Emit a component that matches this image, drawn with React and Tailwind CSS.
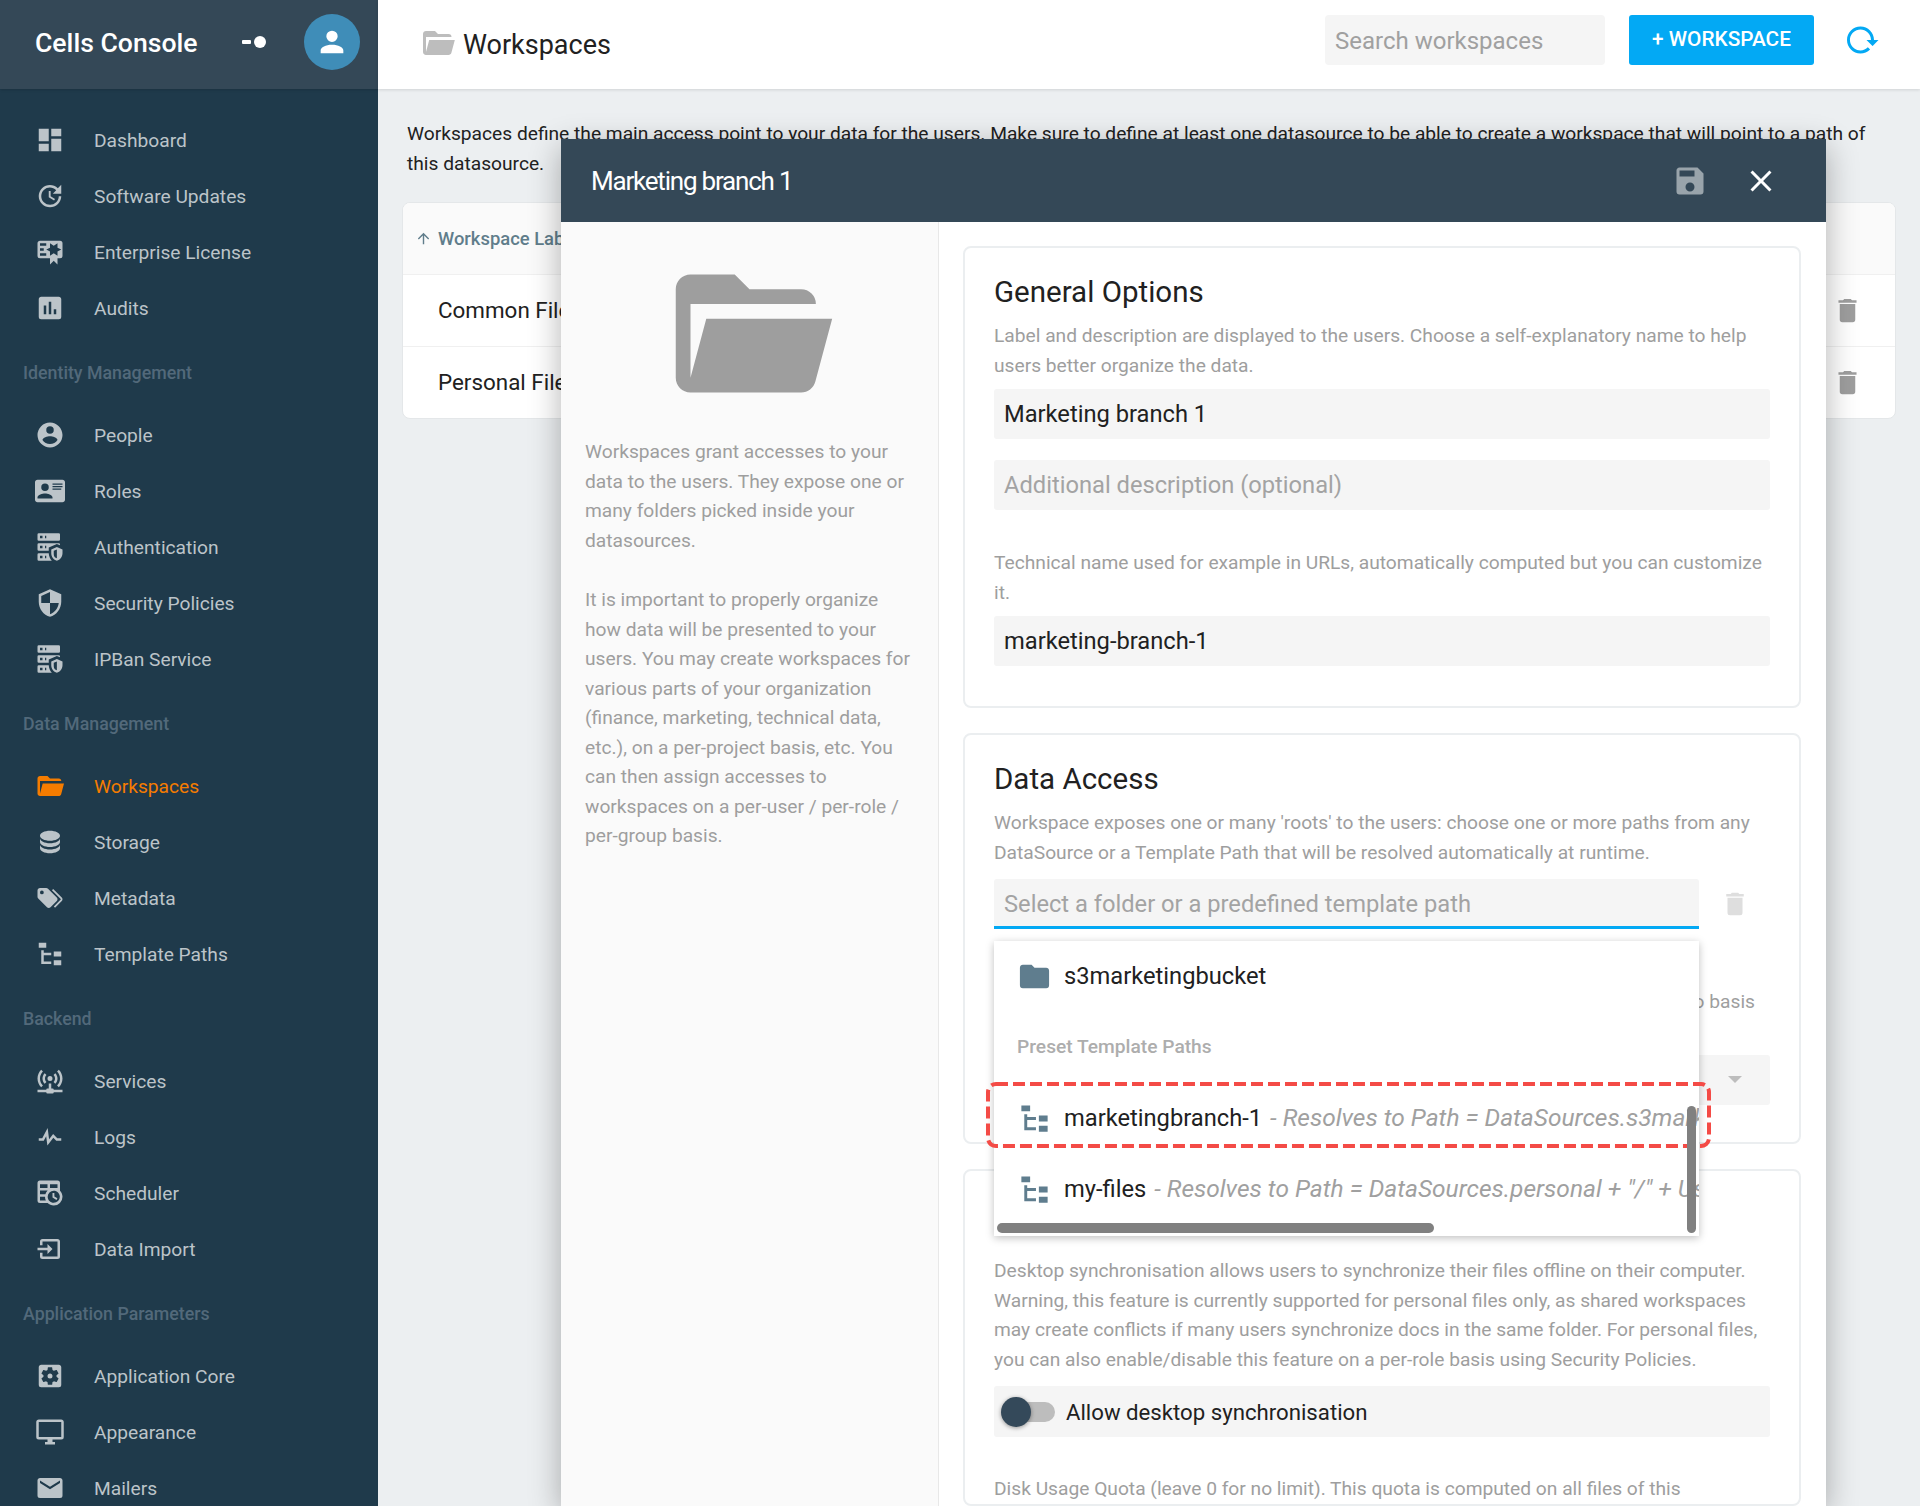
import { MdArrowUpward } from "react-icons/md";

const P = {
  dashboard: "M13,3V9H21V3M13,21H21V11H13M3,21H11V15H3M3,13H11V3H3V13Z",
  update:
    "M21,10.12H14.22L16.96,7.3C14.23,4.6 9.81,4.5 7.08,7.2C4.35,9.91 4.35,14.28 7.08,17C9.81,19.7 14.23,19.7 16.96,17C18.32,15.65 19,14.08 19,12.1H21C21,14.08 20.12,16.65 18.36,18.39C14.85,21.87 9.15,21.87 5.64,18.39C2.14,14.92 2.11,9.28 5.62,5.81C9.13,2.34 14.76,2.34 18.27,5.81L21,3V10.12M12.5,8V12.25L16,14.33L15.28,15.54L11,13V8H12.5Z",
  certificate:
    "M4,3C2.89,3 2,3.89 2,5V15A2,2 0 0,0 4,17H12V22L15,19L18,22V17H20A2,2 0 0,0 22,15V8L22,6V5A2,2 0 0,0 20,3H16V3H4M12,5L15,7L18,5V8.5L21,10L18,11.5V15L15,13L12,15V11.5L9,10L12,8.5V5M4,5H9V7H4V5M4,9H7V11H4V9M4,13H9V15H4V13Z",
  poll: "M17,17H15V13H17M13,17H11V7H13M9,17H7V10H9M19,3H5C3.89,3 3,3.89 3,5V19A2,2 0 0,0 5,21H19A2,2 0 0,0 21,19V5C21,3.89 20.1,3 19,3Z",
  accountCircle:
    "M12,19.2C9.5,19.2 7.29,17.92 6,16C6.03,14 10,12.9 12,12.9C14,12.9 17.97,14 18,16C16.71,17.92 14.5,19.2 12,19.2M12,5A3,3 0 0,1 15,8A3,3 0 0,1 12,11A3,3 0 0,1 9,8A3,3 0 0,1 12,5M12,2A10,10 0 0,0 2,12A10,10 0 0,0 12,22A10,10 0 0,0 22,12C22,6.47 17.5,2 12,2Z",
  card: "M2,3H22C23.05,3 24,3.95 24,5V19C24,20.05 23.05,21 22,21H2C0.95,21 0,20.05 0,19V5C0,3.95 0.95,3 2,3M14,6V7H22V6H14M14,8V9H21.5L22,9V8H14M14,10V11H21V10H14M8,13.91C6,13.91 2,15 2,17V18H14V17C14,15 10,13.91 8,13.91M8,6A3,3 0 0,0 5,9A3,3 0 0,0 8,12A3,3 0 0,0 11,9A3,3 0 0,0 8,6Z",
  serverSecurity:
    "M3,1H19A1,1 0 0,1 20,2V6A1,1 0 0,1 19,7H3A1,1 0 0,1 2,6V2A1,1 0 0,1 3,1M3,9H19A1,1 0 0,1 20,10V10.67L17.5,9.56L11,12.44V15H3A1,1 0 0,1 2,14V10A1,1 0 0,1 3,9M3,17H11C11.06,19.25 12,21.4 13.46,23H3A1,1 0 0,1 2,22V18A1,1 0 0,1 3,17M8,5H9V3H8V5M8,13H9V11H8V13M8,21H9V19H8V21M4,3V5H6V3H4M4,11V13H6V11H4M4,19V21H6V19H4M17.5,12L22,14V17C22,19.78 20.08,22.37 17.5,23C14.92,22.37 13,19.78 13,17V14L17.5,12M17.5,13.94L15,15.06V17.72C15,19.26 16.07,20.7 17.5,21.06V13.94Z",
  security:
    "M12,12H19C18.47,16.11 15.72,19.78 12,20.92V12H5V6.3L12,3.19M12,1L3,5V11C3,16.55 6.84,21.73 12,23C17.16,21.73 21,16.55 21,11V5L12,1Z",
  folderOpen:
    "M19,20H4C2.89,20 2,19.1 2,18V6C2,4.89 2.89,4 4,4H10L12,6H19A2,2 0 0,1 21,8H21L4,8V18L6.14,10H23.21L20.93,18.5C20.7,19.37 19.92,20 19,20Z",
  database:
    "M12,3C7.58,3 4,4.79 4,7C4,9.21 7.58,11 12,11C16.42,11 20,9.21 20,7C20,4.79 16.42,3 12,3M4,9V12C4,14.21 7.58,16 12,16C16.42,16 20,14.21 20,12V9C20,11.21 16.42,13 12,13C7.58,13 4,11.21 4,9M4,14V17C4,19.21 7.58,21 12,21C16.42,21 20,19.21 20,17V14C20,16.21 16.42,18 12,18C7.58,18 4,16.21 4,14Z",
  tags: "M5.5,9A1.5,1.5 0 0,0 7,7.5A1.5,1.5 0 0,0 5.5,6A1.5,1.5 0 0,0 4,7.5A1.5,1.5 0 0,0 5.5,9M17.41,11.58C17.77,11.94 18,12.44 18,13C18,13.55 17.78,14.05 17.41,14.41L12.41,19.41C12.05,19.77 11.55,20 11,20C10.45,20 9.95,19.78 9.58,19.41L2.59,12.42C2.22,12.05 2,11.55 2,11V6C2,4.89 2.89,4 4,4H9C9.55,4 10.05,4.22 10.41,4.58L17.41,11.58M13.54,5.71L14.54,4.71L21.41,11.58C21.78,11.94 22,12.45 22,13C22,13.55 21.78,14.05 21.42,14.41L16.04,19.79L15.04,18.79L20.75,13L13.54,5.71Z",
  fileTree: "M3,3H9V7H3V3M15,10H21V14H15V10M15,17H21V21H15V17M13,13H7V18H13V20H7L5,20V9H7V11H13V13Z",
  network:
    "M4.93,2.93C3.12,4.74 2,7.24 2,10C2,12.76 3.12,15.26 4.93,17.07L6.34,15.66C4.89,14.22 4,12.22 4,10C4,7.79 4.89,5.78 6.34,4.34L4.93,2.93M19.07,2.93L17.66,4.34C19.11,5.78 20,7.79 20,10C20,12.22 19.11,14.22 17.66,15.66L19.07,17.07C20.88,15.26 22,12.76 22,10C22,7.24 20.88,4.74 19.07,2.93M7.76,5.76C6.67,6.85 6,8.35 6,10C6,11.65 6.67,13.15 7.76,14.24L9.17,12.83C8.45,12.11 8,11.11 8,10C8,8.89 8.45,7.89 9.17,7.17L7.76,5.76M16.24,5.76L14.83,7.17C15.55,7.89 16,8.89 16,10C16,11.11 15.55,12.11 14.83,12.83L16.24,14.24C17.33,13.15 18,11.65 18,10C18,8.35 17.33,6.85 16.24,5.76M12,8A2,2 0 0,0 10,10A2,2 0 0,0 12,12A2,2 0 0,0 14,10A2,2 0 0,0 12,8M11,14V18H10A1,1 0 0,0 9,19H2V21H9A1,1 0 0,0 10,22H14A1,1 0 0,0 15,21H22V19H15A1,1 0 0,0 14,18H13V14H11Z",
  pulse: "M3,13H5.79L10.1,4.79L11.28,13.75L14.5,9.66L17.83,13H21V15H17L14.67,12.67L9.92,18.73L8.94,11.31L7,15H3V13Z",
  timetable:
    "M14,12H15.5V14.82L17.94,16.23L17.19,17.53L14,15.69V12M4,2H18A2,2 0 0,1 20,4V10.1C21.24,11.36 22,13.09 22,15A7,7 0 0,1 15,22C13.09,22 11.36,21.24 10.1,20H4A2,2 0 0,1 2,18V4A2,2 0 0,1 4,2M4,15V18H8.67C8.24,17.09 8,16.07 8,15H4M4,8H10V5H4V8M18,8V5H12V8H18M4,13H8.29C8.63,11.85 9.26,10.82 10.1,10H4V13M15,10.15A4.85,4.85 0 0,0 10.15,15C10.15,17.68 12.32,19.85 15,19.85A4.85,4.85 0 0,0 19.85,15C19.85,12.32 17.68,10.15 15,10.15Z",
  import: "M14,12L10,8V11H2V13H10V16M20,18V6C20,4.89 19.1,4 18,4H6A2,2 0 0,0 4,6V9H6V6H18V18H6V15H4V18A2,2 0 0,0 6,20H18A2,2 0 0,0 20,18Z",
  settingsBox:
    "M17.25,12C17.25,12.23 17.23,12.46 17.2,12.68L18.68,13.84C18.81,13.95 18.85,14.13 18.76,14.29L17.36,16.71C17.27,16.86 17.09,16.92 16.93,16.86L15.19,16.16C14.83,16.44 14.43,16.67 14,16.85L13.75,18.7C13.72,18.87 13.57,19 13.4,19H10.6C10.43,19 10.28,18.87 10.25,18.7L10,16.85C9.56,16.67 9.17,16.44 8.81,16.16L7.07,16.86C6.91,16.92 6.73,16.86 6.64,16.71L5.24,14.29C5.15,14.13 5.19,13.95 5.32,13.84L6.8,12.68C6.77,12.46 6.75,12.23 6.75,12C6.75,11.77 6.77,11.54 6.8,11.32L5.32,10.16C5.19,10.05 5.15,9.87 5.24,9.71L6.64,7.29C6.73,7.14 6.91,7.08 7.07,7.14L8.81,7.84C9.17,7.56 9.56,7.33 10,7.15L10.25,5.3C10.28,5.13 10.43,5 10.6,5H13.4C13.57,5 13.72,5.13 13.75,5.3L14,7.15C14.43,7.33 14.83,7.56 15.19,7.84L16.93,7.14C17.09,7.08 17.27,7.14 17.36,7.29L18.76,9.71C18.85,9.87 18.81,10.05 18.68,10.16L17.2,11.32C17.23,11.54 17.25,11.77 17.25,12M19,3H5C3.89,3 3,3.89 3,5V19A2,2 0 0,0 5,21H19A2,2 0 0,0 21,19V5C21,3.89 20.1,3 19,3M12,10C10.89,10 10,10.89 10,12A2,2 0 0,0 12,14A2,2 0 0,0 14,12C14,10.89 13.1,10 12,10Z",
  monitor:
    "M21,16H3V4H21M21,2H3C1.89,2 1,2.89 1,4V16A2,2 0 0,0 3,18H10V20H8V22H16V20H14V18H21A2,2 0 0,0 23,16V4C23,2.89 22.1,2 21,2Z",
  email: "M20,8L12,13L4,8V6L12,11L20,6M20,4H4C2.89,4 2,4.89 2,6V18A2,2 0 0,0 4,20H20A2,2 0 0,0 22,18V6C22,4.89 21.1,4 20,4Z",
  folder: "M10,4H4C2.89,4 2,4.89 2,6V18A2,2 0 0,0 4,20H20A2,2 0 0,0 22,18V8C22,6.89 21.1,6 20,6H12L10,4Z",
  trash: "M19,4H15.5L14.5,3H9.5L8.5,4H5V6H19M6,19A2,2 0 0,0 8,21H16A2,2 0 0,0 18,19V7H6V19Z",
  save: "M15,9H5V5H15M12,19A3,3 0 0,1 9,16A3,3 0 0,1 12,13A3,3 0 0,1 15,16A3,3 0 0,1 12,19M17,3H5C3.89,3 3,3.9 3,5V19A2,2 0 0,0 5,21H19A2,2 0 0,0 21,19V7L17,3Z",
  close: "M19,6.41L17.59,5L12,10.59L6.41,5L5,6.41L10.59,12L5,17.59L6.41,19L12,13.41L17.59,19L19,17.59L13.41,12L19,6.41Z",
  account: "M12,4A4,4 0 0,1 16,8A4,4 0 0,1 12,12A4,4 0 0,1 8,8A4,4 0 0,1 12,4M12,14C16.42,14 20,15.79 20,18V20H4V18C4,15.79 7.58,14 12,14Z",
  reload: "M2 12C2 16.97 6.03 21 11 21C13.39 21 15.68 20.06 17.4 18.4L15.9 16.9C14.63 18.25 12.86 19 11 19C4.76 19 1.64 11.46 6.05 7.05C10.46 2.64 18 5.77 18 12H15L19 16H19.1L23 12H20C20 7.03 15.97 3 11 3C6.03 3 2 7.03 2 12Z",
};

const Icon = ({ d, className }) => (
  <svg viewBox="0 0 24 24" fill="currentColor" className={className}>
    <path d={d} />
  </svg>
);

const menu = [
  {
    items: [
      ["Dashboard", P.dashboard],
      ["Software Updates", P.update],
      ["Enterprise License", P.certificate],
      ["Audits", P.poll],
    ],
  },
  {
    title: "Identity Management",
    items: [
      ["People", P.accountCircle],
      ["Roles", P.card],
      ["Authentication", P.serverSecurity],
      ["Security Policies", P.security],
      ["IPBan Service", P.serverSecurity],
    ],
  },
  {
    title: "Data Management",
    items: [
      ["Workspaces", P.folderOpen, true],
      ["Storage", P.database],
      ["Metadata", P.tags],
      ["Template Paths", P.fileTree],
    ],
  },
  {
    title: "Backend",
    items: [
      ["Services", P.network],
      ["Logs", P.pulse],
      ["Scheduler", P.timetable],
      ["Data Import", P.import],
    ],
  },
  {
    title: "Application Parameters",
    items: [
      ["Application Core", P.settingsBox],
      ["Appearance", P.monitor],
      ["Mailers", P.email],
    ],
  },
];

const Sidebar = () => (
  <aside className="w-[378px] shrink-0 h-full bg-[#1f3a4b] overflow-hidden">
    <div className="h-[89px] bg-[#344857] flex items-center pl-[35px] pb-[6px] shadow-sm">
      <span className="mt-[2px] text-[26.6px] font-medium text-white w-[207px]">Cells Console</span>
      <svg width="24" height="14" viewBox="0 0 24 14" fill="white">
        <rect x="0" y="5" width="9" height="4" rx="1" />
        <circle cx="18" cy="7" r="6" />
      </svg>
      <div className="ml-[38px] w-[56px] h-[56px] rounded-full bg-[#3f8db8] flex items-center justify-center">
        <Icon d={P.account} className="w-[34px] h-[34px] text-white" />
      </div>
    </div>
    <nav className="pt-[23px]">
      {menu.map((section, i) => (
        <div key={i}>
          {section.title && (
            <div className="h-[71px] pt-[3px] pl-[23px] flex items-center text-[17.8px] font-medium text-[#52697a]">
              {section.title}
            </div>
          )}
          {section.items.map(([label, icon, active]) => (
            <div
              key={label}
              className={`h-[56px] flex items-center pl-[35px] text-[19.2px] ${active ? "text-[#f57c00]" : "text-[#bcc4c9]"}`}
            >
              <Icon d={icon} className="w-[30px] h-[30px] shrink-0" />
              <span className="ml-[29px] mt-[2px]">{label}</span>
            </div>
          ))}
        </div>
      ))}
    </nav>
  </aside>
);

const TopBar = () => (
  <header className="h-[89px] bg-white flex items-center pl-[42px] shadow-[0_1px_3px_rgba(0,0,0,0.12)]">
    <Icon d={P.folderOpen} className="w-[36px] h-[36px] text-[#bdbdbd] -mt-[3px]" />
    <h1 className="ml-[7px] mt-[2px] text-[27px] text-[#212121]">Workspaces</h1>
    <div className="ml-auto -mt-[9px] w-[280px] h-[50px] rounded bg-[#f5f5f5] flex items-center pl-[10px] pt-[2px] text-[24px] text-[#a0a0a0]">
      Search workspaces
    </div>
    <button className="ml-[24px] -mt-[9px] w-[185px] h-[50px] rounded-[3px] bg-[#03a9f4] text-white text-[20.8px] font-medium">
      + WORKSPACE
    </button>
    <Icon d={P.reload} className="ml-[30px] mr-[40px] -mt-[9px] w-[36px] h-[36px] text-[#03a9f4]" />
  </header>
);

const WorkspaceRow = ({ label }) => (
  <div className="h-[72px] border-t border-[#f0f0f0] flex items-center justify-between pl-[35px] pr-[32px] text-[22.4px] text-[#212121]">
    {label}
    <Icon d={P.trash} className="w-[31px] h-[31px] -mt-[1px] text-[#9e9e9e]" />
  </div>
);

const Field = ({ value, placeholder }) => (
  <div className={`h-[50px] bg-[#f5f5f5] rounded-[3px] flex items-center px-[10px] pt-[2px] text-[23.7px] ${placeholder ? "text-[#a3a3a3]" : "text-[#212121]"}`}>
    {value || placeholder}
  </div>
);

const Card = ({ className, children }) => (
  <section className={`border-2 border-[#ebeef0] rounded-[8px] px-[29px] ${className}`}>{children}</section>
);

const Heading = ({ children }) => <h2 className="pt-[24px] h-[73px] text-[29.5px] leading-[40px] text-[#212121]">{children}</h2>;

const Hint = ({ className = "", children }) => (
  <p className={`text-[19.2px] leading-[29.5px] text-[#9e9e9e] ${className}`}>{children}</p>
);

const PathRow = ({ name, hint }) => (
  <div className="h-[71px] flex items-center pl-[23px] whitespace-nowrap text-[23.7px] text-[#212121]">
    <Icon d={P.fileTree} className="w-[35px] h-[35px] shrink-0 text-[#5f7d8e]" />
    <span className="ml-[12px]">{name}</span>
    <span className="ml-[8px] italic text-[24.5px] text-[#a0a0a0]">{hint}</span>
  </div>
);

const TemplateDropdown = () => (
  <div className="absolute z-10 left-0 top-[62px] w-[705px] h-[295px] bg-white shadow-[0_2px_8px_rgba(0,0,0,0.25)]">
    <div className="h-full overflow-hidden">
      <div className="h-[71px] flex items-center pl-[23px] text-[23.7px] text-[#212121]">
        <Icon d={P.folder} className="w-[35px] h-[35px] text-[#5f7d8e]" />
        <span className="ml-[12px]">s3marketingbucket</span>
      </div>
      <div className="h-[71px] flex items-center pl-[23px] text-[19.2px] font-medium text-[#adadad]">Preset Template Paths</div>
      <PathRow name="marketingbranch-1" hint={'- Resolves to Path = DataSources.s3marketingbucket + "/" + User.Name'} />
      <PathRow name="my-files" hint={'- Resolves to Path = DataSources.personal + "/" + User.Name'} />
    </div>
    {/* annotation drawn over the list */}
    <svg className="absolute -left-[8px] top-[141px]" width="725" height="66" fill="none">
      <rect x="2" y="2" width="721" height="62" rx="8" stroke="#f44b46" strokeWidth="4" strokeDasharray="12 5" />
    </svg>
    <div className="absolute left-[3px] top-[282px] w-[437px] h-[10px] rounded-full bg-[#808080]" />
    <div className="absolute right-[3px] top-[165px] w-[9px] h-[127px] rounded-full bg-[#808080]" />
  </div>
);

const WorkspaceModal = () => (
  <div className="absolute z-20 left-[561px] top-[139px] w-[1265px] h-[1367px] bg-white flex flex-col overflow-hidden shadow-[0_8px_30px_rgba(0,0,0,0.3)]">
    <div className="h-[83px] shrink-0 bg-[#344857] flex items-center pl-[30px] text-white">
      <span className="mt-[1px] text-[26px] tracking-[-1.2px]">Marketing branch 1</span>
      <Icon d={P.save} className="ml-auto w-[36px] h-[36px] text-[#99a4ab]" />
      <Icon d={P.close} className="ml-[35px] mr-[47px] w-[36px] h-[36px]" />
    </div>
    <div className="flex flex-1 min-h-0">
      <div className="w-[378px] shrink-0 bg-[#fafafa] border-r border-[#e8e8e8] pt-[23px] px-[24px]">
        <Icon d={P.folderOpen} className="w-[177px] h-[177px] mx-auto text-[#9e9e9e]" />
        <Hint className="mt-[15px] w-[330px]">
          Workspaces grant accesses to your data to the users. They expose one or many folders picked inside your datasources.
        </Hint>
        <Hint className="mt-[30px] w-[330px]">
          It is important to properly organize how data will be presented to your users. You may create workspaces for
          various parts of your organization (finance, marketing, technical data, etc.), on a per-project basis, etc.
          You can then assign accesses to workspaces on a per-user / per-role / per-group basis.
        </Hint>
      </div>
      <div className="flex-1 pt-[24px] pl-[24px] pr-[25px]">
        <Card className="h-[462px]">
          <Heading>General Options</Heading>
          <Hint>
            Label and description are displayed to the users. Choose a self-explanatory name to help users better organize the data.
          </Hint>
          <div className="mt-[9px] flex flex-col gap-[21px]">
            <Field value="Marketing branch 1" />
            <Field placeholder="Additional description (optional)" />
          </div>
          <Hint className="mt-[38px]">
            Technical name used for example in URLs, automatically computed but you can customize it.
          </Hint>
          <div className="mt-[9px]">
            <Field value="marketing-branch-1" />
          </div>
        </Card>
        <Card className="mt-[25px] h-[411px]">
          <Heading>Data Access</Heading>
          <Hint>
            Workspace exposes one or many 'roots' to the users: choose one or more paths from any DataSource or a Template Path that will be resolved automatically at runtime.
          </Hint>
          <div className="relative mt-[12px] flex items-center">
            <div className="w-[705px] h-[50px] bg-[#f5f5f5] border-b-[3px] border-[#03a9f4] rounded-t-[3px] flex items-center px-[10px] pt-[4px] text-[23.7px] text-[#a3a3a3]">
              Select a folder or a predefined template path
            </div>
            <Icon d={P.trash} className="ml-[21px] w-[30px] h-[30px] text-[#dedede]" />
            <TemplateDropdown />
          </div>
          <Hint className="mt-[58px] text-right pr-[15px]">Default rights are applied to users on a per-repo basis</Hint>
          <div className="mt-[38px] h-[50px] bg-[#f5f5f5] rounded-[3px] flex items-center justify-end pr-[28px]">
            <div className="w-0 h-0 border-x-[7px] border-x-transparent border-t-[7px] border-t-[#bdbdbd]" />
          </div>
        </Card>
        <Card className="mt-[25px] pt-[85px]">
          <Hint>
            Desktop synchronisation allows users to synchronize their files offline on their computer. Warning, this feature is
            currently supported for personal files only, as shared workspaces may create conflicts if many users synchronize
            docs in the same folder. For personal files, you can also enable/disable this feature on a per-role basis using
            Security Policies.
          </Hint>
          <div className="mt-[12px] h-[51px] bg-[#f5f5f5] rounded-[3px] flex items-center pl-[8px] text-[22.2px] text-[#212121]">
            <div className="relative w-[53px] h-[20px] rounded-full bg-[#bdbdbd]">
              <div className="absolute -left-[1px] -top-[5px] w-[30px] h-[30px] rounded-full bg-[#34495a] shadow-[0_1px_4px_rgba(0,0,0,0.4)]" />
            </div>
            <span className="ml-[11px] mt-[3px]">Allow desktop synchronisation</span>
          </div>
          <Hint className="mt-[37px]">
            Disk Usage Quota (leave 0 for no limit). This quota is computed on all files of this
          </Hint>
        </Card>
      </div>
    </div>
  </div>
);

export default function App() {
  return (
    <div className="relative flex w-[1920px] h-[1506px] overflow-hidden bg-[#eceff1] font-['Roboto',sans-serif]">
      <Sidebar />
      <main className="flex-1 min-w-0">
        <TopBar />
        <p className="mt-[30px] ml-[29px] w-[1480px] text-[19.2px] leading-[29.5px] text-[#212121]">
          Workspaces define the main access point to your data for the users. Make sure to define at least one datasource to be able to create a workspace that will point to a path of this datasource.
        </p>
        <div className="mt-[24px] ml-[24px] w-[1494px] bg-white rounded-[8px] border border-[#e4e7e9] overflow-hidden">
          <div className="h-[71px] bg-[#fafafa] flex items-center pl-[12px] text-[18.4px] font-medium text-[#607d8b]">
            <MdArrowUpward className="w-[17px] h-[17px] mr-[6px]" />
            Workspace Label
          </div>
          <WorkspaceRow label="Common Files" />
          <WorkspaceRow label="Personal Files" />
        </div>
      </main>
      <WorkspaceModal />
    </div>
  );
}
